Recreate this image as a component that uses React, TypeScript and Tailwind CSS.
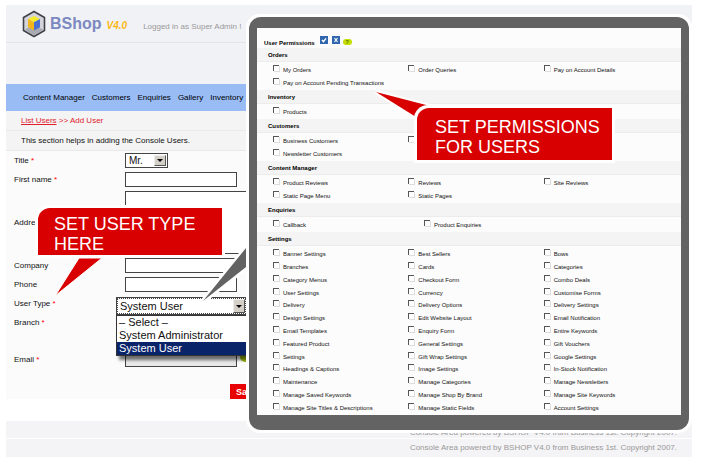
import React from 'react';

type Section = { title: string; items: string[]; cols?: string };

const SECTIONS: Section[] = [
  { title: 'Orders', items: ['My Orders', 'Order Queries', 'Pay on Account Details', 'Pay on Account Pending Transactions'] },
  { title: 'Inventory', items: ['Products'] },
  { title: 'Customers', items: ['Business Customers', '', '', 'Newsletter Customers'] },
  { title: 'Content Manager', items: ['Product Reviews', 'Reviews', 'Site Reviews', 'Static Page Menu', 'Static Pages'] },
  { title: 'Enquiries', items: ['Callback', 'Product Enquiries'], cols: 'grid-cols-[151px_1fr]' },
];

const SETTINGS = [
  'Banner Settings', 'Best Sellers', 'Bows',
  'Branches', 'Cards', 'Categories',
  'Category Menus', 'Checkout Form', 'Combo Deals',
  'User Settings', 'Currency', 'Customise Forms',
  'Delivery', 'Delivery Options', 'Delivery Settings',
  'Design Settings', 'Edit Website Layout', 'Email Notification',
  'Email Templates', 'Enquiry Form', 'Entire Keywords',
  'Featured Product', 'General Settings', 'Gift Vouchers',
  'Settings', 'Gift Wrap Settings', 'Google Settings',
  'Headings & Captions', 'Image Settings', 'In-Stock Notification',
  'Maintenance', 'Manage Categories', 'Manage Newsletters',
  'Manage Saved Keywords', 'Manage Shop By Brand', 'Manage Site Keywords',
  'Manage Site Titles & Descriptions', 'Manage Static Fields', 'Account Settings',
];

function Permission({ name }: { name: string }) {
  return (
    <label className="flex items-center gap-1 whitespace-nowrap">
      <input
        type="checkbox"
        className="mb-1 size-[6px] shrink-0 appearance-none border-t border-l border-[#555] bg-white shadow-[1px_1px_0_#ddd]"
      />
      {name}
    </label>
  );
}

function SectionTitle({ children }: { children: React.ReactNode }) {
  return (
    <h3 className="h-[14px] shrink-0 border-b border-[#ececec] bg-[#f4f4f4] pl-[11px] text-[6px] leading-[14px] font-bold text-black">
      {children}
    </h3>
  );
}

function PermissionsPanel() {
  return (
    <section className="absolute top-[14px] right-[10px] bottom-[31px] left-[246px] rounded-[14px] bg-white p-[3px]">
      <div className="h-full rounded-[12px] bg-[#636363] px-2 pt-[11px] pb-[15px]">
        <div className="flex h-full flex-col bg-[#fcfcfc] text-[6px] leading-[12px] text-[#111]">
          <div className="flex h-5 shrink-0 items-center gap-[3px] pt-[4px] pl-[7px]">
            <h2 className="pt-[6px] pr-[2px] text-[6px] font-bold text-black">User Permissions</h2>
            <button type="button" aria-label="Select all" className="size-2 bg-[#2f66ad]">
              <svg viewBox="0 0 8 8"><path d="M2 4l1.5 1.6L6 2.4" fill="none" stroke="#fff" strokeWidth="1.4" /></svg>
            </button>
            <button type="button" aria-label="Clear all" className="ml-px size-2 bg-[#2f66ad]">
              <svg viewBox="0 0 8 8"><path d="M2.5 2l3 4M5.5 2l-3 4" fill="none" stroke="#fff" strokeWidth="1.2" /></svg>
            </button>
            <button type="button" aria-label="Help" className="mt-[3px] h-[6px] w-[9px] rounded-full bg-[#c3e000] text-[6px] leading-[6px] font-bold text-[#667a00]">
              ?
            </button>
          </div>
          {SECTIONS.map((s) => (
            <React.Fragment key={s.title}>
              <SectionTitle>{s.title}</SectionTitle>
              <div className={`grid shrink-0 auto-rows-[13px] py-px pr-[2px] pl-4 ${s.cols ?? 'grid-cols-3'}`}>
                {s.items.map((n, i) => (i === 2 && !n ? <span key={i} /> : <Permission key={i} name={n} />))}
              </div>
            </React.Fragment>
          ))}
          <SectionTitle>Settings</SectionTitle>
          <div className="grid min-h-0 flex-1 auto-rows-fr grid-cols-3 pt-[2px] pr-[2px] pb-px pl-4">
            {SETTINGS.map((n) => (
              <Permission key={n} name={n} />
            ))}
          </div>
        </div>
      </div>
    </section>
  );
}

function Logo() {
  return (
    <svg viewBox="0 0 24 28" className="h-7 w-6 shrink-0">
      <path d="M12 1.5L22.5 7.5V20.5L12 26.5L1.5 20.5V7.5Z" fill="#d4d5da" stroke="#3f4148" strokeWidth="1.6" />
      <path d="M12 14L21.5 20L12 25.5L2.5 20Z" fill="#a9abb3" />
      <path d="M12 6L18 9L12 12.2L6 9Z" fill="#f4ec2c" />
      <path d="M6 9L12 12.2V20.5L6 17.2Z" fill="#f3b51b" />
      <path d="M18 9L12 12.2V20.5L18 17.2Z" fill="#4a6fd0" />
    </svg>
  );
}

function Field({ id, label, required, className, children }: {
  id: string; label: string; required?: boolean; className: string; children: React.ReactNode;
}) {
  return (
    <div className={`flex ${className}`}>
      <label htmlFor={id} className="w-[111px] shrink-0 self-center">
        {label} {required && <span className="text-[#f00]">*</span>}
      </label>
      {children}
    </div>
  );
}

function DropArrow() {
  return (
    <span className="pointer-events-none absolute inset-y-[2px] right-[2px] flex w-3 items-center justify-center border border-t-[#eee] border-r-[#555] border-b-[#555] border-l-[#eee] bg-[#d4d0c8]">
      <svg viewBox="0 0 6 3" className="h-[3px] w-[6px]"><path d="M0 0H6L3 3Z" /></svg>
    </span>
  );
}

const INPUT = 'h-[15px] w-28 border border-[#444] px-1 outline-none';

export default function App() {
  return (
    <div className="relative min-h-screen overflow-hidden bg-white pt-[5px] pr-[10px] pl-[6px] font-['Liberation_Sans',Arial,sans-serif] text-[8px] leading-[12px] text-[#111]">
      <header className="bg-[#f1f2f6]">
        <div className="flex h-[38px] items-center border-b border-[#e4e5ea] pl-4">
          <Logo />
          <h1 className="ml-1 font-['Liberation_Sans_Narrow','Liberation_Sans',sans-serif] text-[16px] leading-5 font-bold text-[#7c89c0]">BShop</h1>
          <span className="ml-[5px] pt-1 font-['Liberation_Sans_Narrow','Liberation_Sans',sans-serif] text-[10px] font-bold text-[#fbb917] italic">V4.0</span>
          <span className="ml-4 pt-[6px] text-[#999]">Logged in as Super Admin !</span>
        </div>
        <div className="h-[41px]" />
      </header>
      <nav className="flex h-[27px] items-center gap-[7px] bg-[#99bcf5] pl-[17px] text-black">
        {['Content Manager', 'Customers', 'Enquiries', 'Gallery', 'Inventory'].map((n) => (
          <a key={n} href="#">{n}</a>
        ))}
      </nav>
      <div className="h-5 border-b border-[#e9e9e9] bg-[#f4f4f4] pl-[15px] leading-5 text-[#e0202c]">
        <a href="#" className="underline">List Users</a> &gt;&gt; Add User
      </div>
      <p className="h-5 border-b border-[#e9e9e9] bg-[#f4f4f4] pl-[15px] leading-5">
        This section helps in adding the Console Users.
      </p>
      <form className="flex h-[248px] flex-col bg-[#fbfbfb] pt-[2px] pl-2">
        <Field id="title" label="Title" required className="h-[15px]">
          <span className="relative">
            <select id="title" className="h-[15px] w-[43px] appearance-none border border-[#444] bg-white pl-[3px] text-[10px] leading-[12px]">
              <option>Mr.</option>
            </select>
            <DropArrow />
          </span>
        </Field>
        <Field id="first" label="First name" required className="mt-1 h-[15px]">
          <input id="first" className={`${INPUT} bg-white`} />
        </Field>
        <Field id="address" label="Address" className="mt-1 h-[63px]">
          <textarea id="address" className="w-[150px] resize-none border border-[#444] bg-white" />
        </Field>
        <Field id="company" label="Company" className="mt-1 h-[15px]">
          <input id="company" className={`${INPUT} bg-white`} />
        </Field>
        <Field id="phone" label="Phone" className="mt-1 h-[15px]">
          <input id="phone" className={`${INPUT} bg-white`} />
        </Field>
        <Field id="type" label="User Type" required className="mt-1 h-[15px]">
          <span />
        </Field>
        <div className="mt-1 flex h-[15px] items-center">
          <span>Branch <span className="text-[#f00]">*</span></span>
        </div>
        <Field id="email" label="Email" required className="mt-[22px] h-[15px]">
          <input id="email" className={`${INPUT} bg-[#e8e8e8]`} />
          <span className="ml-[3px] h-[10px] w-4 rounded-full bg-[#9fc010]" />
        </Field>
        <button type="button" className="mt-[17px] ml-[216px] h-[15px] w-10 bg-[#e80000] pl-[6px] text-left text-[9px] font-bold text-white">
          Save
        </button>
      </form>
      <footer className="mt-[22px] text-right text-[#999]">
        <p className="h-[18px] border-b border-white bg-[#f4f3f5] pr-[15px] leading-[24px]">Console Area powered by BSHOP V4.0 from Business 1st. Copyright 2007.</p>
        <p className="h-[18px] bg-[#f4f3f5] pr-[15px] leading-[18px]">Console Area powered by BSHOP V4.0 from Business 1st. Copyright 2007.</p>
      </footer>

      <div className="absolute top-[297px] left-[116px] w-[131px] text-[11px] leading-[13px] shadow-[3px_4px_3px_#0008]">
        <div className="relative">
          <select id="type" className="h-[18px] w-full appearance-none border border-[#444] bg-white pl-[3px] outline-1 -outline-offset-2 outline-dotted outline-[#444]">
            <option>System User</option>
          </select>
          <DropArrow />
        </div>
        <ul className="border border-[#333] bg-white">
          <li className="px-[2px]">– Select –</li>
          <li className="px-[2px]">System Administrator</li>
          <li className="bg-[#0a246a] px-[2px] text-white">System User</li>
        </ul>
      </div>

      <PermissionsPanel />

      <svg viewBox="0 0 48 60" className="absolute top-[245px] left-[201px] h-[60px] w-12">
        <path d="M46 2L2 56L46 22Z" fill="#636363" stroke="#fff" strokeWidth="5" />
        <path d="M48 0V60H45V0Z" fill="#fff" />
        <path d="M45 3L2 56L45 22Z" fill="#636363" />
      </svg>

      <div className="absolute top-[205px] left-[35px] w-[190px] rounded-tl-[14px] bg-white p-[3px]">
        <p className="rounded-tl-[12px] bg-[#d80000] pt-[6px] pb-px pl-4 text-[18px] leading-5 text-white">SET USER TYPE<br />HERE</p>
      </div>
      <svg viewBox="0 0 54 42" className="absolute top-[256px] left-[52px] h-[42px] w-[54px]">
        <path d="M27 2H50L3 40Z" fill="#d80000" stroke="#fff" />
      </svg>

      <svg viewBox="0 0 66 34" className="absolute top-[88px] left-[370px] h-[34px] w-[66px]">
        <path d="M6 4L60 18L46 29Z" fill="#d80000" stroke="#fff" strokeWidth="4" />
        <path d="M6 4L60 18L46 29Z" fill="#d80000" />
      </svg>
      <div className="absolute top-[105px] left-[414px] w-[201px] rounded-tl-[14px] bg-white p-[3px]">
        <p className="rounded-tl-[12px] bg-[#d80000] pt-[9px] pb-[3px] pl-[18px] text-[18px] leading-5 text-white">SET PERMISSIONS<br />FOR USERS</p>
      </div>
    </div>
  );
}
